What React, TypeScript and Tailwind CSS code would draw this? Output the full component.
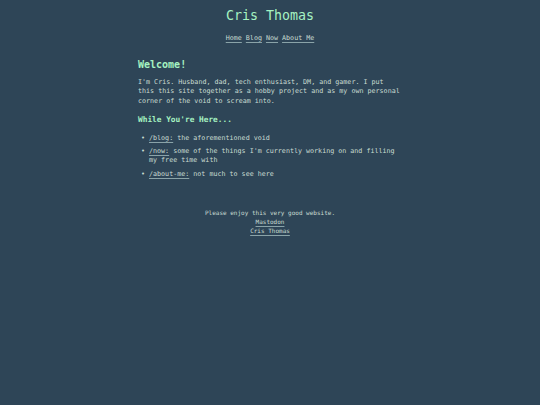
import React from "react";

const mono = { fontFamily: '"DejaVu Sans Mono", "Liberation Mono", monospace' };

function A({ children }: { children: React.ReactNode }) {
  return (
    <a href="#" className="underline decoration-[#8aa3a8] underline-offset-[2px] decoration-[1px]">
      {children}
    </a>
  );
}

export default function App() {
  return (
    <div className="min-h-[405px] w-full bg-[#2e4557] text-[#c9dcd2]" style={mono}>
      <header className="pt-[8px] text-center">
        <h1 className="text-[13.3px] leading-[16px] text-[#a6f3c2]">Cris Thomas</h1>
        <nav className="mt-[9.5px] text-[6.7px] leading-[9px] flex justify-center gap-[4px]">
          <A>Home</A>
          <A>Blog</A>
          <A>Now</A>
          <A>About Me</A>
        </nav>
      </header>
      <main className="mx-auto w-[264px] mt-[16px]">
        <h2 className="text-[10px] leading-[12px] font-bold text-[#a6f3c2]">Welcome!</h2>
        <p className="mt-[7px] text-[6.7px] leading-[9.5px]">
          I'm Cris. Husband, dad, tech enthusiast, DM, and gamer. I put this this site together as a hobby project and as my own personal corner of the void to scream into.
        </p>
        <h3 className="mt-[8.5px] text-[7.8px] leading-[10px] font-bold text-[#a6f3c2]">While You're Here...</h3>
        <ul className="mt-[9px] text-[6.7px] leading-[9.5px] flex flex-col gap-[3.75px]">
          <li className="flex">
            <span className="w-[11px] shrink-0 pl-[3px]">•</span>
            <span><A>/blog:</A> the aforementioned void</span>
          </li>
          <li className="flex">
            <span className="w-[11px] shrink-0 pl-[3px]">•</span>
            <span><A>/now:</A> some of the things I'm currently working on and filling my free time with</span>
          </li>
          <li className="flex">
            <span className="w-[11px] shrink-0 pl-[3px]">•</span>
            <span><A>/about-me:</A> not much to see here</span>
          </li>
        </ul>
      </main>
      <footer className="mt-[29px] text-center text-[6px] leading-[9px] flex flex-col items-center">
        <p>Please enjoy this very good website.</p>
        <A>Mastodon</A>
        <A>Cris Thomas</A>
      </footer>
    </div>
  );
}
